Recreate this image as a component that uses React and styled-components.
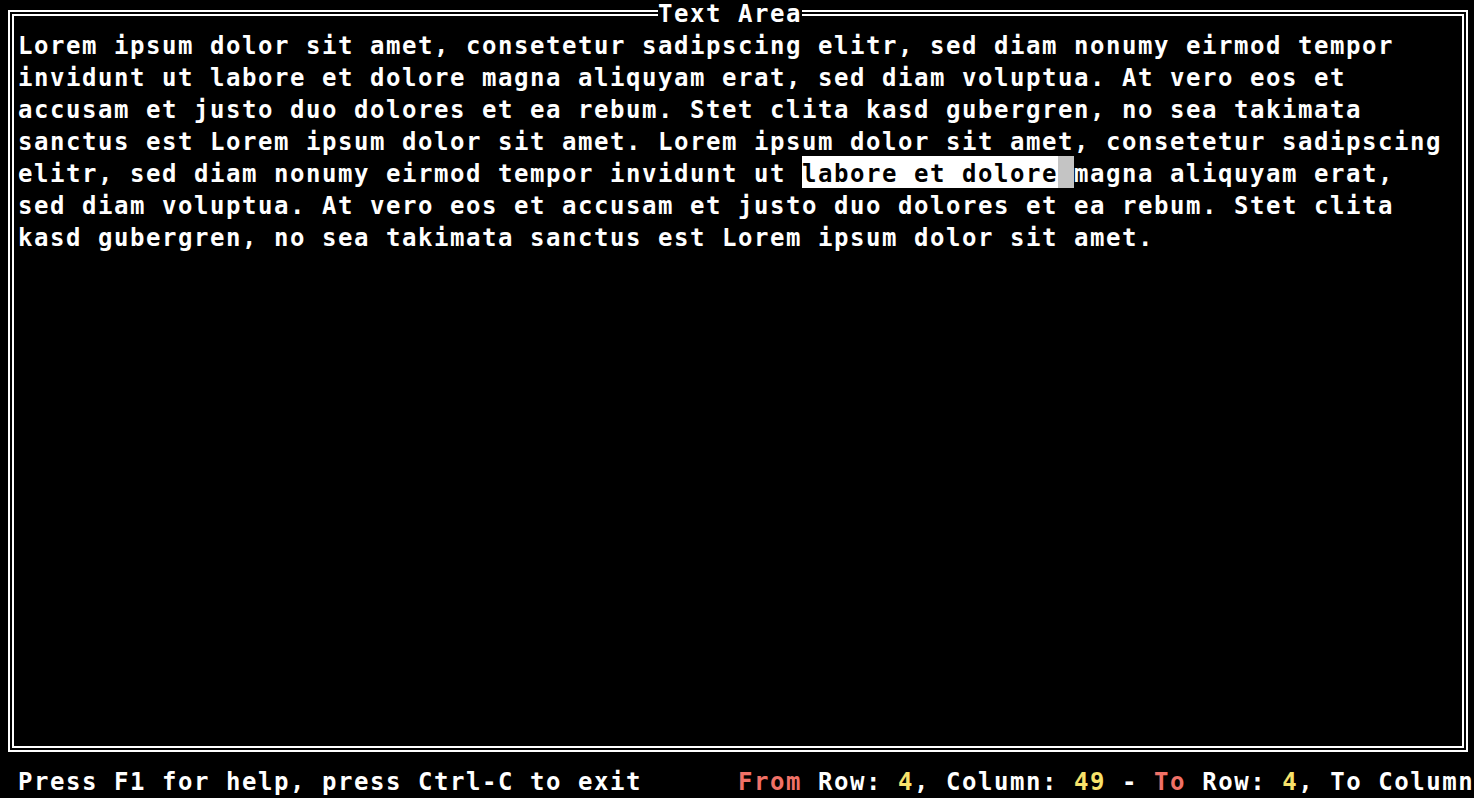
import React from "react";
import styled, { createGlobalStyle } from "styled-components";

const Global = createGlobalStyle`
  html, body {
    margin: 0;
    padding: 0;
    background: #000;
  }
`;

const Screen = styled.div`
  width: 1474px;
  height: 798px;
  overflow: hidden;
  background: #000;
  color: #fff;
  font-family: "DejaVu Sans Mono", "Liberation Mono", monospace;
  font-weight: bold;
  font-size: 24px;
  letter-spacing: 1.551px;
  display: flex;
  flex-direction: column;
  border-radius: 0 0 10px 10px;
`;

const Frame = styled.div`
  position: relative;
  margin: 10px 6px 0 8px;
  height: 742px;
  box-sizing: border-box;
  border: 2px solid #fff;
  padding: 2px;
  display: flex;
`;

const Inner = styled.div`
  flex: 1;
  border: 2px solid #fff;
  padding: 12px 0 0 4px;
  overflow: hidden;
`;

const Title = styled.div`
  position: absolute;
  top: -16px;
  left: 648px;
  display: flex;
  background: #000;
`;

const Row = styled.div`
  display: flex;
  height: 32px;
  white-space: pre;
`;

const Seg = styled.span`
  display: block;
  height: 32px;
  line-height: 36px;
  color: ${(p) => p.$fg || "#fff"};
  background: ${(p) => p.$bg || "transparent"};
`;

const Status = styled(Row)`
  margin-top: 12px;
  padding-left: 18px;
`;

const RED = "#f07167";
const YELLOW = "#f8e36b";

const lines = [
  [{ t: "Lorem ipsum dolor sit amet, consetetur sadipscing elitr, sed diam nonumy eirmod tempor" }],
  [{ t: "invidunt ut labore et dolore magna aliquyam erat, sed diam voluptua. At vero eos et" }],
  [{ t: "accusam et justo duo dolores et ea rebum. Stet clita kasd gubergren, no sea takimata" }],
  [{ t: "sanctus est Lorem ipsum dolor sit amet. Lorem ipsum dolor sit amet, consetetur sadipscing" }],
  [
    { t: "elitr, sed diam nonumy eirmod tempor invidunt ut " },
    { t: "labore et dolore", bg: "#fff", fg: "#000" },
    { t: " ", bg: "#c4c4c4" },
    { t: "magna aliquyam erat," },
  ],
  [{ t: "sed diam voluptua. At vero eos et accusam et justo duo dolores et ea rebum. Stet clita" }],
  [{ t: "kasd gubergren, no sea takimata sanctus est Lorem ipsum dolor sit amet." }],
];

// the terminal is 92 cells wide, so the status line stops at "To Column"
const status = [
  { t: "Press F1 for help, press Ctrl-C to exit      " },
  { t: "From", fg: RED },
  { t: " Row: " },
  { t: "4", fg: YELLOW },
  { t: ", Column: " },
  { t: "49", fg: YELLOW },
  { t: " - " },
  { t: "To", fg: RED },
  { t: " Row: " },
  { t: "4", fg: YELLOW },
  { t: ", To Column" },
];

const renderSegs = (segs) =>
  segs.map((s, i) => (
    <Seg key={i} $fg={s.fg} $bg={s.bg}>
      {s.t}
    </Seg>
  ));

export default function App() {
  return (
    <>
      <Global />
      <Screen>
        <Frame>
          <Title>
            <Seg>Text Area</Seg>
          </Title>
          <Inner>
            {lines.map((segs, i) => (
              <Row key={i}>{renderSegs(segs)}</Row>
            ))}
          </Inner>
        </Frame>
        <Status>{renderSegs(status)}</Status>
      </Screen>
    </>
  );
}
